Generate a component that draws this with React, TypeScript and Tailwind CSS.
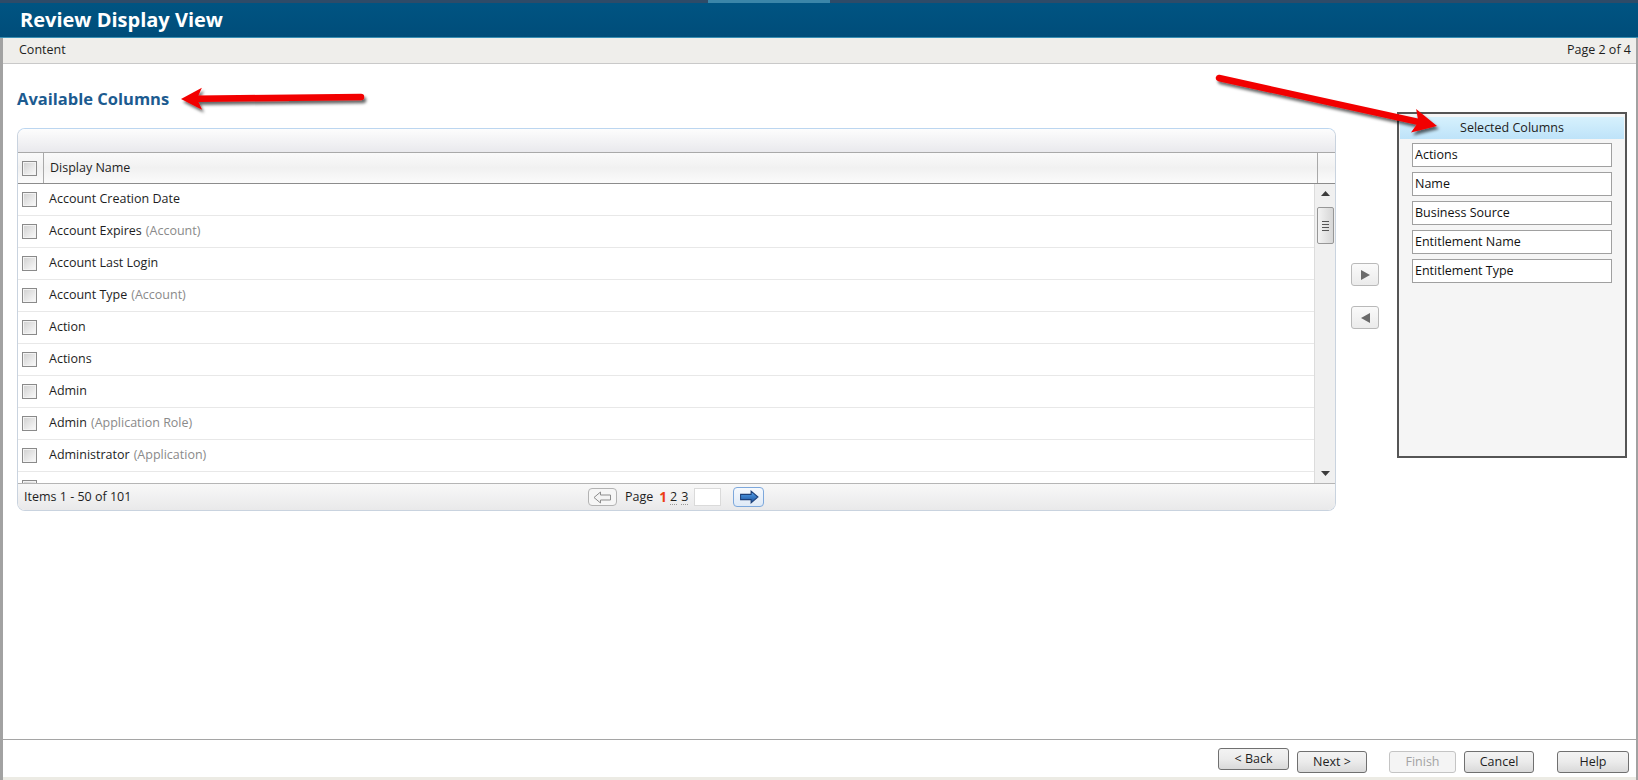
import React from 'react';

const rows: [string, string?][] = [
  ['Account Creation Date'],
  ['Account Expires', '(Account)'],
  ['Account Last Login'],
  ['Account Type', '(Account)'],
  ['Action'],
  ['Actions'],
  ['Admin'],
  ['Admin', '(Application Role)'],
  ['Administrator', '(Application)'],
  [''],
];

const selected = ['Actions', 'Name', 'Business Source', 'Entitlement Name', 'Entitlement Type'];

function CheckBox() {
  return (
    <span className="block w-[15px] h-[15px] border border-[#8a8a8a] bg-linear-to-br from-[#d0d0d0] to-[#fbfbfb] shadow-[inset_0_0_0_1px_#f3f3f3]" />
  );
}

// red annotation arrow: tail -> tip
function RedArrow({ x1, y1, x2, y2, len, half }: { x1: number; y1: number; x2: number; y2: number; len: number; half: number }) {
  const dx = x2 - x1;
  const dy = y2 - y1;
  const d = Math.hypot(dx, dy);
  const ux = dx / d;
  const uy = dy / d;
  const bx = x2 - ux * len;
  const by = y2 - uy * len;
  const nx = -uy;
  const ny = ux;
  const notchX = x2 - ux * (len - 5);
  const notchY = y2 - uy * (len - 5);
  const pts = [
    `${x2},${y2}`,
    `${bx + nx * half},${by + ny * half}`,
    `${notchX},${notchY}`,
    `${bx - nx * half},${by - ny * half}`,
  ].join(' ');
  return (
    <g filter="url(#shadow)">
      <line x1={x1} y1={y1} x2={notchX} y2={notchY} stroke="#f20000" strokeWidth={6.5} strokeLinecap="round" />
      <polygon points={pts} fill="#f20000" />
    </g>
  );
}

function FooterButton({ label, width, disabled }: { label: string; width: string; disabled?: boolean }) {
  return (
    <button
      type="button"
      className={
        disabled
          ? `${width} h-[22px] rounded-[3px] border border-[#c4c4c4] bg-[#f4f4f4] text-[12.5px] text-[#a3a3a3]`
          : `${width} h-[22px] rounded-[3px] border border-[#707070] bg-linear-to-b from-[#f3f3f3] via-[#ebebeb] to-[#d9d9d9] text-[12.5px] text-[#1e1e1e]`
      }
    >
      {label}
    </button>
  );
}

export default function App() {
  return (
    <div className="relative w-[1638px] h-[780px] overflow-hidden bg-white flex flex-col font-['Open_Sans',sans-serif] text-[#1e1e1e]">
      {/* window top strip */}
      <div className="h-[3px] bg-[#2e4b68] flex">
        <div className="ml-[708px] w-[122px] bg-[#3b86a9]" />
      </div>

      {/* title bar */}
      <div className="h-[35px] bg-linear-to-b from-[#005482] to-[#004d7a] border-b border-[#3a90b4] flex items-center pl-[20px]">
        <h1 className="text-[20px] font-bold text-white leading-none">Review Display View</h1>
      </div>

      <div className="flex-1 flex flex-col border-l-[3px] border-r-[2px] border-[#a2a2a2]">
        {/* toolbar */}
        <div className="h-[26px] bg-[#efeeeb] border-b border-[#c9c9c9] flex items-center justify-between pl-[16px] pr-[5px] text-[12.5px]">
          <span>Content</span>
          <span>Page 2 of 4</span>
        </div>

        {/* content */}
        <div className="flex-1 flex items-start pl-[14px]">
          <div className="flex flex-col">
            <h2 className="mt-[25px] h-[20px] leading-[20px] text-[16.5px] font-bold text-[#1c5b90]">Available Columns</h2>

            {/* grid */}
            <div className="mt-[19px] w-[1319px] h-[383px] flex flex-col rounded-[8px] border border-[#c9d3df] border-t-[#bcd6f0] overflow-hidden">
              <div className="h-[23px] bg-linear-to-b from-[#fdfdfd] to-[#e9e9ed]" />
              <div className="h-[32px] flex border-y border-t-[#a9a9a9] border-b-[#8c8c8c] bg-linear-to-b from-[#fafafa] via-[#f1f1f1] to-[#fbfbfb] text-[12.5px]">
                <div className="w-[26px] border-r border-[#a9a9a9] flex items-center pl-[4px]">
                  <CheckBox />
                </div>
                <div className="flex-1 flex items-center pl-[6px]">Display Name</div>
                <div className="w-[18px] border-l border-[#a9a9a9]" />
              </div>
              <div className="flex-1 flex overflow-hidden">
                <div className="flex-1 overflow-hidden">
                  {rows.map(([name, extra], i) => (
                    <div key={i} className="h-[32px] border-b border-[#e8e8e8] flex items-center pl-[4px] text-[12.5px]">
                      <CheckBox />
                      {name && <span className="ml-[12px]">{name}</span>}
                      {extra && <span className="ml-[4px] text-[#8a8a8a]">{extra}</span>}
                    </div>
                  ))}
                </div>
                {/* scrollbar */}
                <div className="w-[21px] bg-[#f0f0f0] border-l border-[#dcdcdc] flex flex-col items-center">
                  <svg width="9" height="6" viewBox="0 0 9 6" className="mt-[7px]">
                    <path d="M0 5 L4.5 0 L9 5 Z" fill="#3c3c3c" />
                  </svg>
                  <div className="mt-[10px] w-[17px] h-[37px] rounded-[2px] border border-[#979797] bg-linear-to-r from-[#f3f3f3] to-[#d6d6d6] flex flex-col items-center justify-center gap-[2px]">
                    <span className="block w-[7px] h-px bg-[#555]" />
                    <span className="block w-[7px] h-px bg-[#555]" />
                    <span className="block w-[7px] h-px bg-[#555]" />
                    <span className="block w-[7px] h-px bg-[#555]" />
                  </div>
                  <div className="flex-1" />
                  <svg width="9" height="6" viewBox="0 0 9 6" className="mb-[6px]">
                    <path d="M0 0 L9 0 L4.5 5 Z" fill="#3c3c3c" />
                  </svg>
                </div>
              </div>
              {/* pager */}
              <div className="h-[27px] border-t border-[#b5b5b5] bg-linear-to-b from-[#f8f8f8] to-[#e9e9ea] flex items-center text-[12.5px] relative">
                <span className="pl-[6px]">Items 1 - 50 of 101</span>
                <div className="absolute left-[570px] top-[3px] flex items-center">
                  <span className="w-[29px] h-[18px] rounded-[4px] border border-[#b3b3b3] bg-[#f6f6f6] flex items-center justify-center">
                    <svg width="19" height="13" viewBox="0 0 19 13">
                      <path d="M1 6.5 L7.5 1 L7.5 4 L17.5 4 L17.5 9 L7.5 9 L7.5 12 Z" fill="#f4f4f4" stroke="#8d8d8d" strokeWidth="1" />
                    </svg>
                  </span>
                  <span className="ml-[8px]">Page</span>
                  <span className="ml-[6px] font-bold text-[#ec3d16] text-[13.5px]">1</span>
                  <span className="ml-[3px] border-b border-dotted border-[#999] leading-[15px]">2</span>
                  <span className="ml-[4px] border-b border-dotted border-[#999] leading-[15px]">3</span>
                  <span className="ml-[6px] w-[27px] h-[18px] bg-white border border-[#dadada]" />
                  <span className="ml-[12px] w-[31px] h-[20px] rounded-[4px] border border-[#7da8dc] bg-linear-to-b from-[#f6f9fd] to-[#dfeaf7] flex items-center justify-center">
                    <svg width="20" height="14" viewBox="0 0 19 13">
                      <defs>
                        <linearGradient id="blueArrow" x1="0" y1="0" x2="0" y2="1">
                          <stop offset="0" stopColor="#56a6f2" />
                          <stop offset="1" stopColor="#1a4f9a" />
                        </linearGradient>
                      </defs>
                      <path d="M18 6.5 L11.5 1 L11.5 4 L1.5 4 L1.5 9 L11.5 9 L11.5 12 Z" fill="url(#blueArrow)" stroke="#1c3f78" strokeWidth="1" />
                    </svg>
                  </span>
                </div>
              </div>
            </div>
          </div>

          {/* move buttons */}
          <div className="ml-[15px] mt-[199px] flex flex-col gap-[20px]">
            <span className="w-[28px] h-[23px] rounded-[3px] border border-[#b9b9b9] bg-linear-to-b from-[#fafafa] to-[#ebebeb] flex items-center justify-center">
              <svg width="9" height="10" viewBox="0 0 9 10">
                <path d="M0 0 L9 5 L0 10 Z" fill="#6a6a6a" />
              </svg>
            </span>
            <span className="w-[28px] h-[23px] rounded-[3px] border border-[#b9b9b9] bg-linear-to-b from-[#fafafa] to-[#ebebeb] flex items-center justify-center">
              <svg width="9" height="10" viewBox="0 0 9 10">
                <path d="M9 0 L0 5 L9 10 Z" fill="#6a6a6a" />
              </svg>
            </span>
          </div>

          {/* selected columns */}
          <div className="ml-[18px] mt-[48px] w-[230px] h-[346px] border-2 border-[#555] bg-[#f5f5f5] flex flex-col">
            <div className="mx-px mt-[3px] h-[22px] bg-linear-to-b from-[#d6f1fd] to-[#bee3f9] flex items-center justify-center text-[12.5px] text-[#222]">
              Selected Columns
            </div>
            <div className="mt-[4px] ml-[13px] flex flex-col gap-[5px]">
              {selected.map((s) => (
                <div key={s} className="w-[200px] h-[24px] border border-[#a0a0a0] bg-white flex items-center pl-[2px] text-[12.5px] text-[#111]">
                  {s}
                </div>
              ))}
            </div>
          </div>
        </div>

        {/* footer */}
        <div className="h-[38px] border-t border-[#a5a5a5] flex items-start justify-end pt-[8px] pr-[7px]">
          <FooterButton label="< Back" width="w-[71px]" />
          <span className="ml-[8px]"><FooterButton label="Next >" width="w-[70px]" /></span>
          <span className="ml-[22px]"><FooterButton label="Finish" width="w-[67px]" disabled /></span>
          <span className="ml-[8px]"><FooterButton label="Cancel" width="w-[70px]" /></span>
          <span className="ml-[23px]"><FooterButton label="Help" width="w-[72px]" /></span>
        </div>
        <div className="h-[3px] bg-[#ecebe4]" />
      </div>

      {/* annotation arrows */}
      <svg className="absolute inset-0 pointer-events-none" width="1638" height="780" viewBox="0 0 1638 780">
        <defs>
          <filter id="shadow" x="-10%" y="-50%" width="120%" height="200%">
            <feDropShadow dx="2" dy="3" stdDeviation="1.6" floodColor="#000" floodOpacity="0.6" />
          </filter>
        </defs>
        <RedArrow x1={361} y1={97} x2={181} y2={99} len={21} half={11} />
        <RedArrow x1={1219} y1={78} x2={1437} y2={126} len={24} half={12} />
      </svg>
    </div>
  );
}
